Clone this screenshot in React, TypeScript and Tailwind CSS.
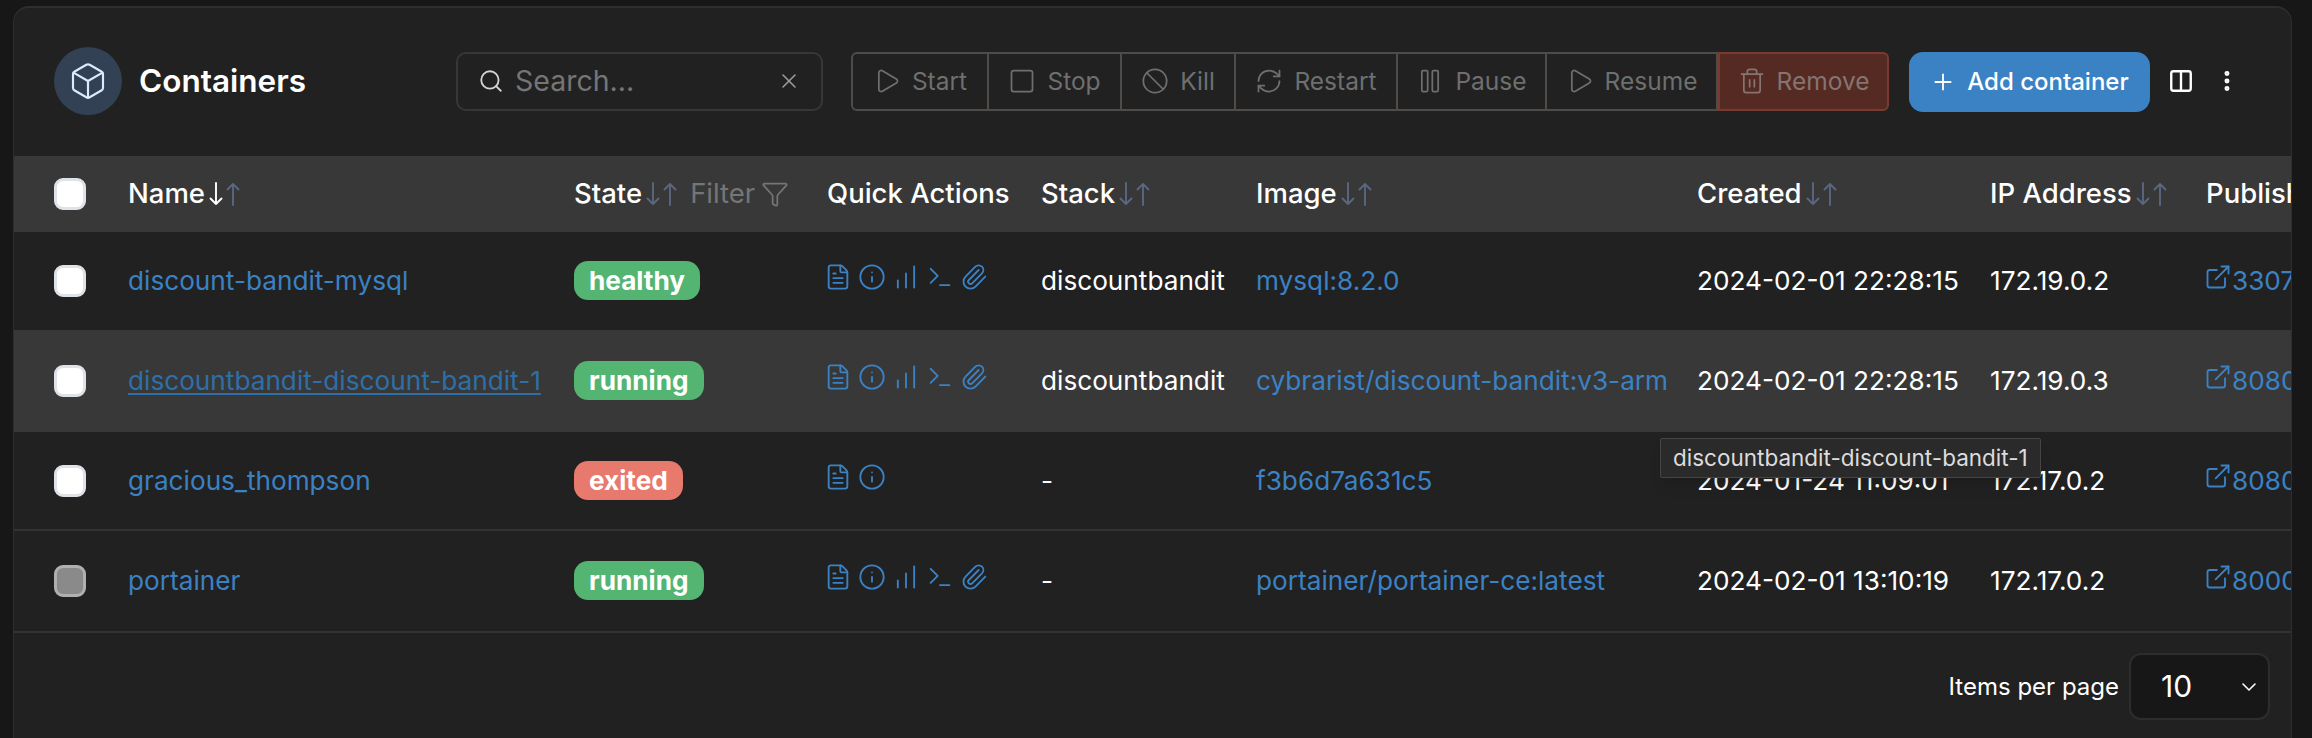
import React from 'react';
import {
  Ban, Box, ChartNoAxesColumnIncreasing, ChevronDown, Columns2, EllipsisVertical, ExternalLink, FileText, Filter,
  Info, Paperclip, Pause, Play, Plus, RefreshCw, Search, Square, Terminal, Trash2, X,
} from 'lucide-react';

const actions = [
  { label: 'Start', icon: Play, width: 'w-[136px]' },
  { label: 'Stop', icon: Square, width: 'w-[133px]' },
  { label: 'Kill', icon: Ban, width: 'w-[114px]' },
  { label: 'Restart', icon: RefreshCw, width: 'w-[162px]' },
  { label: 'Pause', icon: Pause, width: 'w-[149px]' },
  { label: 'Resume', icon: Play, width: 'w-[171px]' },
];

const rows = [
  { name: 'discount-bandit-mysql', state: 'healthy', stack: 'discountbandit', image: 'mysql:8.2.0', created: '2024-02-01 22:28:15', ip: '172.19.0.2', port: '3307:3306', all: true, h: 'h-[98px]', selected: true },
  { name: 'discountbandit-discount-bandit-1', state: 'running', stack: 'discountbandit', image: 'cybrarist/discount-bandit:v3-arm', created: '2024-02-01 22:28:15', ip: '172.19.0.3', port: '8080:80', all: true, h: 'h-[102px]', selected: true, hover: true },
  { name: 'gracious_thompson', state: 'exited', stack: '-', image: 'f3b6d7a631c5', created: '2024-01-24 11:09:01', ip: '172.17.0.2', port: '8080:80', all: false, h: 'h-[98px]', selected: true },
  { name: 'portainer', state: 'running', stack: '-', image: 'portainer/portainer-ce:latest', created: '2024-02-01 13:10:19', ip: '172.17.0.2', port: '8000:8000', all: true, h: 'h-[102px]', selected: false },
];

const Arrow = ({ up, className }: { up?: boolean; className: string }) => (
  <svg viewBox="0 0 16 26" className={`h-[26px] w-[16px] ${up ? 'rotate-180' : ''} ${className}`} fill="none" stroke="currentColor" strokeWidth="1.9" strokeLinecap="round" strokeLinejoin="round">
    <path d="M8 2v21M2.5 17.5 8 23l5.5-5.5" />
  </svg>
);

const Checkbox = ({ on }: { on: boolean }) => (
  <span className={`block h-8 w-8 rounded-[9px] border-[3px] ${on ? 'border-[#dfe3e8] bg-white' : 'border-[#b0b0b0] bg-[#8a8a8a]'}`} />
);

const Head = ({ label, sort = true, active }: { label: string; sort?: boolean; active?: boolean }) => (
  <span className="inline-flex items-center whitespace-nowrap font-medium text-white">
    {label}
    {sort && (
      <span className="ml-[3px] inline-flex items-center gap-[1px]">
        <Arrow className={active ? 'text-white' : 'text-[#5b6780]'} />
        <Arrow up className="text-[#5b6780]" />
      </span>
    )}
  </span>
);

const App: React.FC = () => {
  return (
    <div className="h-[738px] w-[2312px] overflow-hidden bg-[#171717] pl-[13px] pr-[20px] pt-[6px] font-['Inter',sans-serif] text-[26.2px] text-white">
      <div className="h-[760px] overflow-hidden rounded-t-[16px] border-x border-t-2 border-[#2e2e2e] bg-[#212121]">
        <div className="flex h-[148px] items-center pb-[2px] pl-[40px]">
          <div className="flex h-[68px] w-[68px] shrink-0 items-center justify-center rounded-full bg-[#334155] text-[#dbeafe]">
            <Box size={40} strokeWidth={1.3} />
          </div>
          <h1 className="ml-[17px] w-[317px] shrink-0 text-[31.5px] font-semibold">Containers</h1>
          <div className="flex h-[59px] w-[367px] shrink-0 items-center rounded-[10px] border-2 border-[#373737] px-[20px] text-[#757575]">
            <Search size={26} strokeWidth={1.7} className="text-[#d4d4d4]" />
            <span className="ml-[11px] flex-1 text-[28.5px]">Search...</span>
            <X size={24} strokeWidth={1.6} className="text-[#9a9a9a]" />
          </div>
          <div className="ml-[28px] flex h-[59px] shrink-0 overflow-hidden rounded-l-[6px] border-2 border-r-0 border-[#4f4b48] text-[24.5px] text-[#6f6f6f]">
            {actions.map(a => (
              <div key={a.label} className={`flex items-center justify-center gap-[11px] border-r-2 border-[#4f4b48] ${a.width}`}>
                <a.icon size={28} strokeWidth={1.5} />
                {a.label}
              </div>
            ))}
          </div>
          <div className="flex h-[59px] w-[171px] shrink-0 items-center justify-center gap-[11px] rounded-r-[6px] border-2 border-[#7a3a30] bg-[#552a23] text-[24.5px] text-[#857470]">
            <Trash2 size={28} strokeWidth={1.5} />
            Remove
          </div>
          <button className="ml-[20px] mt-[1px] flex h-[60px] w-[241px] shrink-0 items-center justify-center gap-[11px] rounded-[14px] bg-[#3b82c4] text-[24px] font-medium">
            <Plus size={26} strokeWidth={1.7} />
            Add container
          </button>
          <Columns2 size={26} strokeWidth={2.2} className="ml-[18px] shrink-0" />
          <EllipsisVertical size={26} strokeWidth={2.6} className="ml-[20px] shrink-0" />
        </div>
        <div className="relative">
          <table className="w-[2392px] table-fixed border-collapse">
            <colgroup>
              <col className="w-[114px]" />
              <col className="w-[446px]" />
              <col className="w-[253px]" />
              <col className="w-[214px]" />
              <col className="w-[215px]" />
              <col className="w-[441px]" />
              <col className="w-[293px]" />
              <col className="w-[216px]" />
              <col className="w-[200px]" />
            </colgroup>
            <thead>
              <tr className="h-[76px] bg-[#383838] text-left text-[27.5px]">
                <th className="pl-[40px]"><Checkbox on /></th>
                <th><Head label="Name" active /></th>
                <th>
                  <span className="flex items-center">
                    <Head label="State" />
                    <span className="ml-[12px] font-normal text-[#757575]">Filter</span>
                    <Filter size={28} strokeWidth={1.5} className="ml-[6px] text-[#757575]" />
                  </span>
                </th>
                <th><Head label="Quick Actions" sort={false} /></th>
                <th><Head label="Stack" /></th>
                <th><Head label="Image" /></th>
                <th><Head label="Created" /></th>
                <th><Head label="IP Address" /></th>
                <th><Head label="Published Ports" sort={false} /></th>
              </tr>
            </thead>
            <tbody>
              {rows.map((r, i) => (
                <tr key={r.name} className={`${r.h} ${r.hover ? 'bg-[#383838]' : ''} ${i >= 2 ? 'border-b-2 border-[#333333]' : ''}`}>
                  <td className="pl-[40px]"><Checkbox on={r.selected} /></td>
                  <td className={`whitespace-nowrap ${r.hover ? 'text-[#2f6fa8] underline underline-offset-[3px]' : 'text-[#3b82c4]'}`}>{r.name}</td>
                  <td>
                    <span className={`inline-flex h-[39px] items-center rounded-[14px] px-[15px] font-bold ${r.state === 'exited' ? 'bg-[#e8796d]' : 'bg-[#54b472]'}`}>
                      {r.state}
                    </span>
                  </td>
                  <td>
                    <div className="-ml-[3px] -mt-[8px] flex items-center gap-[6px] text-[#3b82c4]">
                      <FileText size={28} strokeWidth={1.6} />
                      <Info size={28} strokeWidth={1.6} />
                      {r.all && (
                        <>
                          <ChartNoAxesColumnIncreasing size={28} strokeWidth={1.6} />
                          <Terminal size={28} strokeWidth={1.6} />
                          <Paperclip size={28} strokeWidth={1.6} />
                        </>
                      )}
                    </div>
                  </td>
                  <td className="whitespace-nowrap">{r.stack}</td>
                  <td className="whitespace-nowrap text-[#3b82c4]">{r.image}</td>
                  <td className="whitespace-nowrap">{r.created}</td>
                  <td className="whitespace-nowrap">{r.ip}</td>
                  <td className="whitespace-nowrap text-[#3b82c4]">
                    <span className="-ml-[2px] flex items-center">
                      <ExternalLink size={28} strokeWidth={1.6} className="-mt-[8px]" />
                      {r.port}
                    </span>
                  </td>
                </tr>
              ))}
            </tbody>
          </table>
          <div className="absolute left-[1646px] top-[282px] rounded-[2px] border border-[#454545] bg-[#2a2a2a] px-[12px] py-[2px] text-[22.5px] whitespace-nowrap text-[#dcdcdc] shadow-lg">
            discountbandit-discount-bandit-1
          </div>
        </div>
        <div className="flex items-center justify-end pr-[21px] pt-[20px]">
          <span className="text-[24px]">Items per page</span>
          <div className="ml-[10px] flex h-[67px] w-[141px] items-center justify-between rounded-[12px] border-2 border-[#2d2d2d] bg-[#171717] pl-[30px] pr-[7px] text-[30px]">
            10
            <ChevronDown size={24} strokeWidth={1.6} />
          </div>
        </div>
      </div>
    </div>
  );
};

export default App;
